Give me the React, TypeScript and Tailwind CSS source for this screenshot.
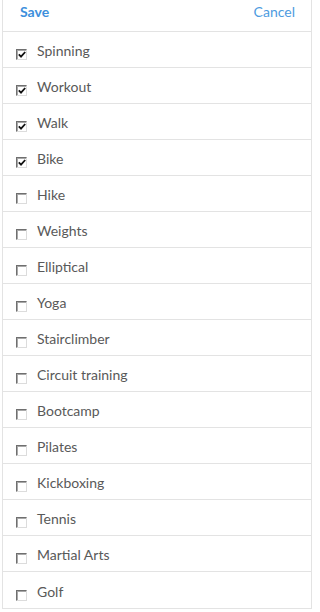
import { useState } from "react";

const activities = [
  { name: "Spinning", checked: true },
  { name: "Workout", checked: true },
  { name: "Walk", checked: true },
  { name: "Bike", checked: true },
  { name: "Hike", checked: false },
  { name: "Weights", checked: false },
  { name: "Elliptical", checked: false },
  { name: "Yoga", checked: false },
  { name: "Stairclimber", checked: false },
  { name: "Circuit training", checked: false },
  { name: "Bootcamp", checked: false },
  { name: "Pilates", checked: false },
  { name: "Kickboxing", checked: false },
  { name: "Tennis", checked: false },
  { name: "Martial Arts", checked: false },
  { name: "Golf", checked: false },
];

function Box({ checked }: { checked: boolean }) {
  return (
    <span className="mt-[10px] flex h-[11px] w-[11px] shrink-0 items-center justify-center border border-t-[#6f6f6f] border-l-[#6f6f6f] border-b-[#dcdcdc] border-r-[#dcdcdc] bg-white shadow-[inset_1px_1px_0_#a8a8a8]">
      {checked && (
        <svg width="8" height="7" viewBox="0 0 8 7">
          <path d="M0.8 3.4 L3 5.6 L7.2 1" stroke="#111" strokeWidth="1.8" fill="none" />
        </svg>
      )}
    </span>
  );
}

export default function App() {
  const [items, setItems] = useState(activities);

  const toggle = (i: number) => {
    setItems(items.map((it, idx) => (idx === i ? { ...it, checked: !it.checked } : it)));
  };

  return (
    <div className="h-[612px] w-[317px] bg-white font-['Lato',sans-serif]">
      <div className="ml-[2px] w-[310px] border-x border-b border-[#e3e3e3]">
        <div className="flex h-[32px] items-center justify-between border-b border-[#e3e3e3] pb-[8px] pl-[17px] pr-[16px]">
          <button className="text-[14px] font-bold text-[#3d8fdc]">Save</button>
          <button className="text-[14px] text-[#4d9be0]">Cancel</button>
        </div>
        {items.map((it, i) => (
          <div
            key={it.name}
            onClick={() => toggle(i)}
            className="flex h-[36px] items-center gap-[10px] border-b border-[#e3e3e3] pl-[13px] last:border-b-0"
          >
            <Box checked={it.checked} />
            <span className="pt-[2px] text-[14px] text-[#595959]">{it.name}</span>
          </div>
        ))}
      </div>
    </div>
  );
}
